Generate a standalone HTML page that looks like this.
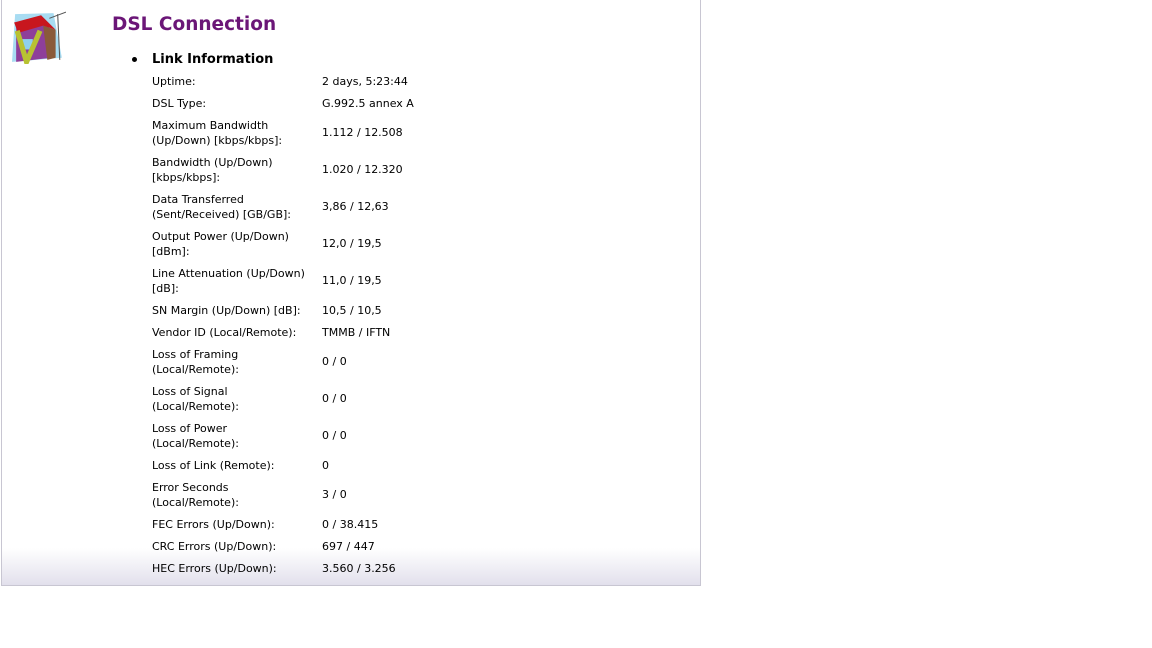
<!DOCTYPE html>
<html><head><style>
body{margin:0;background:#fff;font-family:"DejaVu Sans","Liberation Sans",sans-serif;}
#box{position:absolute;left:1px;top:0;width:698px;height:585px;border:1px solid #c8c6d2;border-top:none;background:linear-gradient(to bottom,#fff 0,#fff 548px,#e2e0ec 585px);}
h1{position:absolute;left:112px;top:10px;margin:0;font-size:18.5px;font-weight:bold;color:#6b1677;line-height:26px;}
.li{position:absolute;left:152px;top:49px;font-size:13px;font-weight:bold;line-height:18px;color:#000;}
.bul{position:absolute;left:132px;top:56px;width:5px;height:5px;border-radius:50%;background:#000;}
.rows{position:absolute;left:152px;top:70px;font-size:11px;color:#000;}
.r{display:flex;align-items:center;line-height:15px;}
.r .l{width:170px;}
.s{height:22px}.d{height:37px}
</style></head><body>
<div id="box"></div>
<svg style="position:absolute;left:12px;top:10px" width="54" height="54" viewBox="0 0 52 52">
<polygon points="3,4 40,3 48,46 0,50" fill="#a8dcf2"/>
<polygon points="4,16 30,10 38,20 38,46 4,50" fill="#8e3f9a"/>
<polygon points="2,12 28,5 42,19 30,15 6,22" fill="#c8161e"/>
<polygon points="30,15 42,19 42,46 34,48" fill="#8a5a3a"/>
<rect x="8" y="28" width="12" height="10" fill="#8ed0ee"/>
<polyline points="5,20 14,50 27,20" fill="none" stroke="#b8c232" stroke-width="5"/>
<line x1="44" y1="4" x2="46" y2="48" stroke="#555" stroke-width="1"/>
<line x1="36" y1="8" x2="52" y2="2" stroke="#555" stroke-width="1"/>
</svg>
<h1 style="top:12px">DSL Connection</h1>
<div class="bul" style="top:57px"></div>
<div class="li" style="top:51px">Link Information</div>
<div class="rows">
<div class="r s"><div class="l">Uptime:</div><div>2 days, 5:23:44</div></div>
<div class="r s"><div class="l">DSL Type:</div><div>G.992.5 annex A</div></div>
<div class="r d"><div class="l">Maximum Bandwidth<br>(Up/Down) [kbps/kbps]:</div><div>1.112 / 12.508</div></div>
<div class="r d"><div class="l">Bandwidth (Up/Down)<br>[kbps/kbps]:</div><div>1.020 / 12.320</div></div>
<div class="r d"><div class="l">Data Transferred<br>(Sent/Received) [GB/GB]:</div><div>3,86 / 12,63</div></div>
<div class="r d"><div class="l">Output Power (Up/Down)<br>[dBm]:</div><div>12,0 / 19,5</div></div>
<div class="r d"><div class="l">Line Attenuation (Up/Down)<br>[dB]:</div><div>11,0 / 19,5</div></div>
<div class="r s"><div class="l">SN Margin (Up/Down) [dB]:</div><div>10,5 / 10,5</div></div>
<div class="r s"><div class="l">Vendor ID (Local/Remote):</div><div>TMMB / IFTN</div></div>
<div class="r d"><div class="l">Loss of Framing<br>(Local/Remote):</div><div>0 / 0</div></div>
<div class="r d"><div class="l">Loss of Signal<br>(Local/Remote):</div><div>0 / 0</div></div>
<div class="r d"><div class="l">Loss of Power<br>(Local/Remote):</div><div>0 / 0</div></div>
<div class="r s"><div class="l">Loss of Link (Remote):</div><div>0</div></div>
<div class="r d"><div class="l">Error Seconds<br>(Local/Remote):</div><div>3 / 0</div></div>
<div class="r s"><div class="l">FEC Errors (Up/Down):</div><div>0 / 38.415</div></div>
<div class="r s"><div class="l">CRC Errors (Up/Down):</div><div>697 / 447</div></div>
<div class="r s"><div class="l">HEC Errors (Up/Down):</div><div>3.560 / 3.256</div></div>
</div>
</body></html>
